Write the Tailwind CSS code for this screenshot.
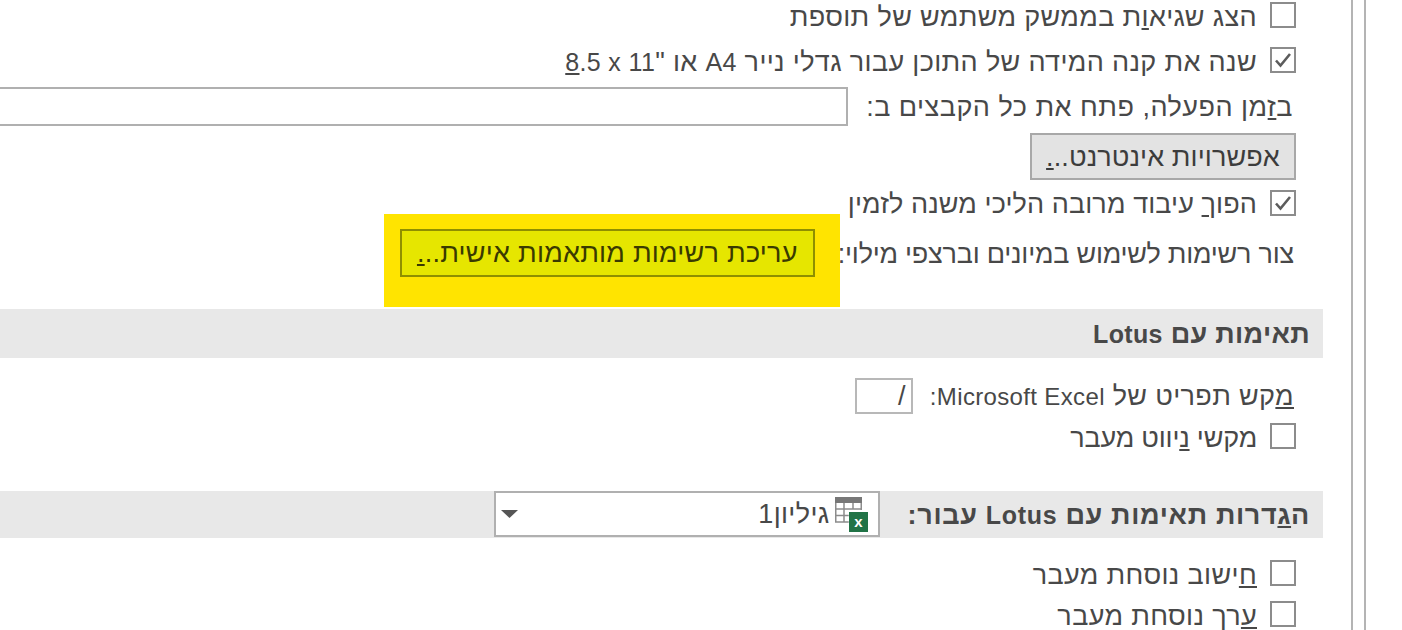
<!DOCTYPE html>
<html lang="he" dir="rtl">
<head>
    <meta charset="UTF-8">
    <title>Excel Options</title>
    <script src="https://cdn.jsdelivr.net/npm/@tailwindcss/browser@4"></script>
</head>
<body class="bg-white">
<div class="flex w-[1402px] h-[630px] overflow-hidden bg-white text-[#484848] text-[27px] leading-[30px] tracking-[0.35px]">
    <div class="w-[38px] shrink-0 border-l-2 border-[#b4b4b4]"></div>
    <div class="w-[13px] shrink-0 border-l-2 border-[#b4b4b4]"></div>

    <main class="w-[1323px] shrink-0 mr-[28px] font-['Liberation_Sans',sans-serif]">
        <!-- general options -->
        <div class="pr-[27px]">
            <label class="flex items-center gap-[13px] h-[26px] mt-[2px]">
                <span class="w-[26px] h-[26px] shrink-0 border-2 border-[#8c8c8c] bg-white"></span>
                <span class="pt-[3px]">הצג שגיא<u>ו</u>ת בממשק משתמש של תוספת</span>
            </label>
            <label class="flex items-center gap-[13px] h-[26px] mt-[19px]">
                <span class="w-[26px] h-[26px] shrink-0 border-2 border-[#8c8c8c] bg-white flex items-center justify-center">
                    <svg width="20" height="20" viewBox="0 0 20 20" fill="none" stroke="#5c5c5c" stroke-width="2.6"><path d="M3 10.500l4.500 5L17 4"/></svg>
                </span>
                <span class="pt-[3px]">שנה את קנה המידה של התוכן עבור גדלי נייר <span class="text-[25px]">A4</span> או "<bdi dir="ltr" class="text-[25px]"><u>8</u>.5 x 11</bdi></span>
            </label>
            <div class="flex items-center h-[40px] mt-[13px]">
                <span class="pr-[3px] pt-[1px] whitespace-nowrap tracking-[0.5px]">ב<u>ז</u>מן הפעלה, פתח את כל הקבצים ב:</span>
                <span class="w-[860px] h-[39px] shrink-0 mr-[18px] border-2 border-[#b0b0b0] bg-white"></span>
            </div>
            <button class="flex items-center justify-center w-[266px] h-[47px] mt-[7px] bg-[#e3e3e3] border-2 border-[#a8a8a8] text-[#3c3c3c] tracking-[0.1px]">אפשרויות אינטרנט..<u>.</u></button>
            <label class="flex items-center gap-[13px] h-[26px] mt-[10px]">
                <span class="w-[26px] h-[26px] shrink-0 border-2 border-[#8c8c8c] bg-white flex items-center justify-center">
                    <svg width="20" height="20" viewBox="0 0 20 20" fill="none" stroke="#5c5c5c" stroke-width="2.6"><path d="M3 10.500l4.500 5L17 4"/></svg>
                </span>
                <span class="pt-[2px] tracking-[0.1px]">הפו<u>ך</u> עיבוד מרובה הליכי משנה לזמין</span>
            </label>
            <div class="flex items-center h-[48px] mt-[13px] pr-[2px]">
                <span class="pt-[1px] whitespace-nowrap tracking-[-0.23px]">צור רשימות לשימוש במיונים וברצפי מילוי:</span>
                <div class="relative mr-[23px]">
                    <div class="absolute -top-[15px] -bottom-[30px] -right-[25px] -left-[16px] bg-[#ffe400]"></div>
                    <button class="relative flex items-center justify-center w-[415px] h-[48px] bg-[#e6e600] border-2 border-[#8f8f00] text-[#3a3a00] tracking-[0.25px]">עריכת רשימות מותאמות אישית..<u>.</u></button>
                </div>
            </div>
        </div>

        <!-- lotus compatibility -->
        <h2 class="flex items-center h-[49px] mt-[32px] pr-[13px] bg-[#e8e8e8] font-bold">
            <span>תאימות עם <span class="text-[25px]">Lotus</span></span>
        </h2>
        <div class="pr-[27px]">
            <div class="flex items-center h-[36px] mt-[20px] pr-[2px]">
                <span class="pt-[1px] whitespace-nowrap"><u>מ</u>קש תפריט של <span class="text-[24px]">Microsoft Excel:</span></span>
                <span class="flex items-center w-[58px] h-[36px] mr-[17px] pr-[5px] border-2 border-[#b8b8b8] bg-white">/</span>
            </div>
            <label class="flex items-center gap-[13px] h-[26px] mt-[9px]">
                <span class="w-[26px] h-[26px] shrink-0 border-2 border-[#8c8c8c] bg-white"></span>
                <span class="pt-[3px] tracking-[-0.2px]">מקשי <u>נ</u>יווט מעבר</span>
            </label>
        </div>

        <!-- lotus compatibility settings -->
        <h2 class="flex items-center h-[47px] mt-[42px] pr-[13px] bg-[#e8e8e8] font-bold">
            <span class="whitespace-nowrap tracking-[0.68px]">ה<u>ג</u>דרות תאימות עם <span class="text-[25px]">Lotus</span> עבור:</span>
            <div class="flex items-center justify-between self-start w-[386px] h-[46px] mr-[28px] pr-[10px] pl-[5px] border-2 border-[#b0b0b0] bg-white font-normal tracking-[0.35px]">
                <span class="flex items-center gap-[5px]">
                    <svg width="33" height="35" viewBox="0 0 33 35" class="shrink-0">
                        <rect x="0" y="0" width="27" height="6" fill="#777777"/>
                        <path d="M.750 6v19h13M.750 12h26M.750 18.500h13M9 6v19M18 6v6M26.250 6v7" fill="none" stroke="#8c8c8c" stroke-width="1.500"/>
                        <rect x="14" y="15" width="19" height="20" fill="#217346"/>
                        <text x="23.500" y="30" text-anchor="middle" fill="#ffffff" font-size="15" font-weight="700" font-family="Liberation Sans">x</text>
                    </svg>
                    <span>גיליון1</span>
                </span>
                <svg width="17" height="8" viewBox="0 0 17 8"><path d="M0 0h17L8.500 8z" fill="#555555"/></svg>
            </div>
        </h2>
        <div class="pr-[27px]">
            <label class="flex items-center gap-[13px] h-[26px] mt-[22px]">
                <span class="w-[26px] h-[26px] shrink-0 border-2 border-[#8c8c8c] bg-white"></span>
                <span class="pt-[3px]"><u>ח</u>ישוב נוסחת מעבר</span>
            </label>
            <label class="flex items-center gap-[13px] h-[26px] mt-[15px]">
                <span class="w-[26px] h-[26px] shrink-0 border-2 border-[#8c8c8c] bg-white"></span>
                <span class="pt-[3px]"><u>ע</u>רך נוסחת מעבר</span>
            </label>
        </div>
    </main>
</div>
</body>
</html>
